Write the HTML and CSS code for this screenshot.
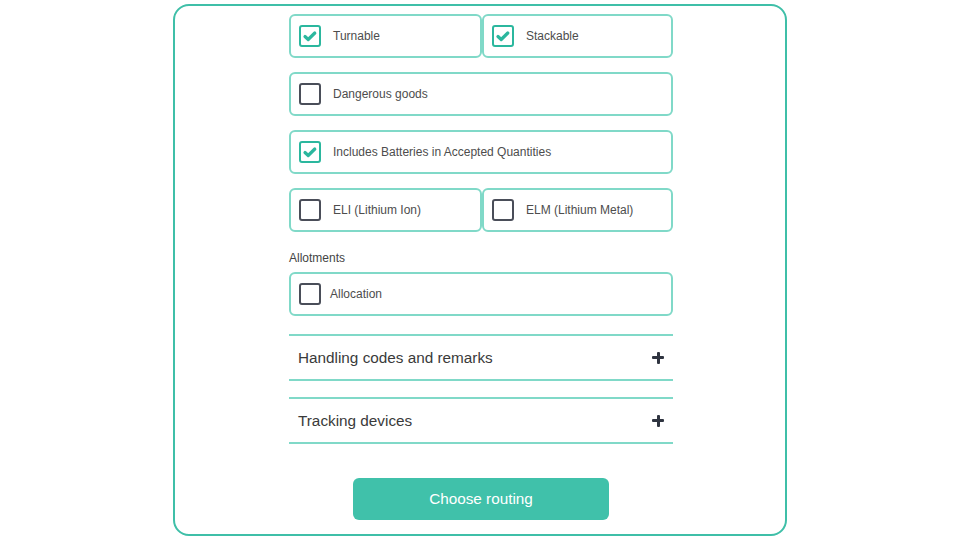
FILE: index.html
```html
<!DOCTYPE html>
<html>
<head>
<meta charset="utf-8">
<link rel="stylesheet" href="styles.css">
</head>
<body>
<div class="card">
  <div class="column">
    <div class="row two">
      <label class="opt"><span class="box checked"><svg viewBox="0 0 18 18"><path d="M4 9.5l3.2 3L13.8 6" fill="none" stroke="#2bb79e" stroke-width="3.2" stroke-linecap="round" stroke-linejoin="round"/></svg></span><span class="txt">Turnable</span></label>
      <label class="opt"><span class="box checked"><svg viewBox="0 0 18 18"><path d="M4 9.5l3.2 3L13.8 6" fill="none" stroke="#2bb79e" stroke-width="3.2" stroke-linecap="round" stroke-linejoin="round"/></svg></span><span class="txt">Stackable</span></label>
    </div>
    <div class="row">
      <label class="opt"><span class="box"></span><span class="txt">Dangerous goods</span></label>
    </div>
    <div class="row">
      <label class="opt"><span class="box checked"><svg viewBox="0 0 18 18"><path d="M4 9.5l3.2 3L13.8 6" fill="none" stroke="#2bb79e" stroke-width="3.2" stroke-linecap="round" stroke-linejoin="round"/></svg></span><span class="txt">Includes Batteries in Accepted Quantities</span></label>
    </div>
    <div class="row two">
      <label class="opt"><span class="box"></span><span class="txt">ELI (Lithium Ion)</span></label>
      <label class="opt"><span class="box"></span><span class="txt">ELM (Lithium Metal)</span></label>
    </div>
    <div class="section-label">Allotments</div>
    <div class="row">
      <label class="opt"><span class="box"></span><span class="txt tight">Allocation</span></label>
    </div>
    <div class="accordion first">
      <span class="acc-title">Handling codes and remarks</span>
      <span class="plus"></span>
    </div>
    <div class="accordion">
      <span class="acc-title">Tracking devices</span>
      <span class="plus"></span>
    </div>
    <div class="actions">
      <button class="primary">Choose routing</button>
    </div>
  </div>
</div>
</body>
</html>
```

FILE: styles.css
```css
* { box-sizing: border-box; }
html, body { margin: 0; padding: 0; background: #fff; }
body {
  font-family: "Liberation Sans", Arial, sans-serif;
  color: #444;
  width: 960px;
  height: 540px;
  overflow: hidden;
}
.card {
  width: 614px;
  height: 532px;
  margin: 4px auto 0;
  border: 2px solid #3fbfa8;
  border-radius: 16px;
  padding-top: 8px;
  padding-left: 114px;
}
.column {
  width: 384px;
  display: flex;
  flex-direction: column;
}
.row {
  display: grid;
  grid-template-columns: 1fr;
  margin-bottom: 14px;
}
.row.two { grid-template-columns: 193px 191px; }
.opt {
  height: 44px;
  border: 2px solid #80d9c8;
  border-radius: 6px;
  display: flex;
  align-items: center;
  padding-left: 8px;
}
.box {
  width: 22px;
  height: 22px;
  border: 2px solid #4a4e59;
  border-radius: 3px;
  flex: none;
  display: flex;
  align-items: center;
  justify-content: center;
}
.box.checked { border-color: #2bb79e; }
.box svg { width: 18px; height: 18px; display: block; }
.txt {
  font-size: 12px;
  color: #4d4d4d;
  margin-left: 12px;
}
.txt.tight { margin-left: 9px; }
.section-label {
  font-size: 12px;
  color: #444;
  line-height: 14px;
  margin-top: 5px;
  margin-bottom: 7px;
}
.row:has(+ .accordion) { margin-bottom: 18px; }
.accordion {
  height: 47px;
  border-top: 2px solid #80d9c8;
  border-bottom: 2px solid #80d9c8;
  display: flex;
  align-items: center;
  justify-content: space-between;
  padding: 0 9px 0 9px;
  margin-bottom: 16px;
}
.acc-title {
  font-size: 15.3px;
  color: #3a3a3a;
}
.plus {
  position: relative;
  width: 12px;
  height: 12px;
  margin-right: 0;
}
.plus::before, .plus::after {
  content: "";
  position: absolute;
  background: #2f3440;
  border-radius: 1px;
}
.plus::before { left: 0; top: 4.5px; width: 12px; height: 3px; }
.plus::after { left: 4.5px; top: 0; width: 3px; height: 12px; }
.actions {
  display: flex;
  justify-content: center;
  margin-top: 18px;
}
.primary {
  width: 256px;
  height: 42px;
  border: none;
  border-radius: 6px;
  background: #40c1aa;
  color: #fff;
  font-family: "Liberation Sans", Arial, sans-serif;
  font-size: 15.3px;
}
```
